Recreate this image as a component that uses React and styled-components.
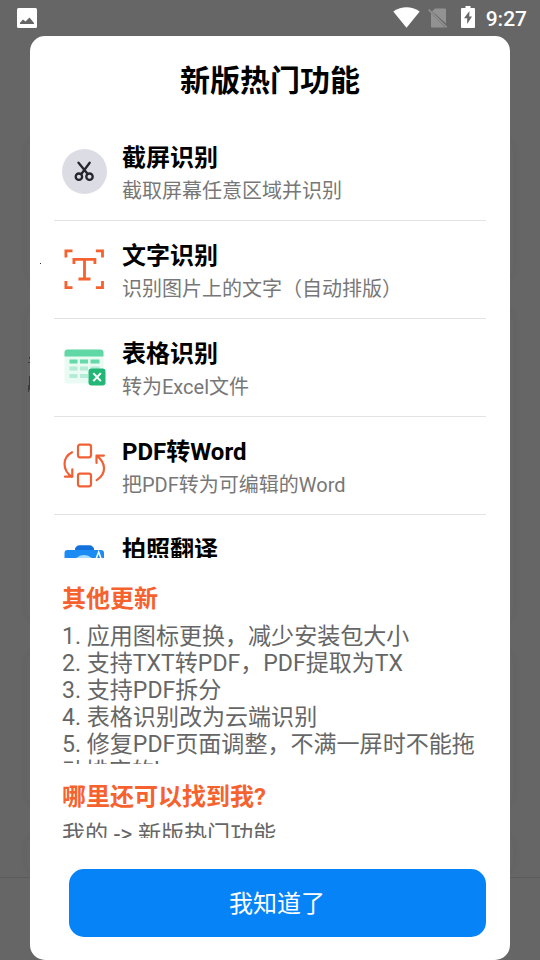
import React from "react"
import styled, { createGlobalStyle } from "styled-components"

const features = [
  { id: "shot", Icon: ScissorsIcon, title: "截屏识别", desc: "截取屏幕任意区域并识别" },
  { id: "text", Icon: TextScanIcon, title: "文字识别", desc: "识别图片上的文字（自动排版）" },
  { id: "table", Icon: TableIcon, title: "表格识别", desc: "转为Excel文件" },
  { id: "word", Icon: ConvertIcon, title: "PDF转Word", desc: "把PDF转为可编辑的Word" },
  { id: "camera", Icon: CameraIcon, title: "拍照翻译", desc: "" },
]

const updates = [
  "1. 应用图标更换，减少安装包大小",
  "2. 支持TXT转PDF，PDF提取为TX",
  "3. 支持PDF拆分",
  "4. 表格识别改为云端识别",
  "5. 修复PDF页面调整，不满一屏时不能拖动排序的b",
]

function ScissorsIcon() {
  return (
    <svg width="46" height="46" viewBox="0.5 0.5 46 46" fill="none">
      <circle cx="23" cy="23" r="22.5" fill="#dcdde4" />
      <g stroke="#23252f" strokeWidth="2.3" strokeLinecap="round">
        <path d="M17 14.2 25.8 25M28.2 14.2 20.2 25" />
        <circle cx="17.4" cy="28.2" r="3.2" />
        <circle cx="28" cy="28.2" r="3.2" />
      </g>
    </svg>
  )
}

function TextScanIcon() {
  return (
    <svg width="46" height="46" viewBox="0.5 0.5 46 46" fill="none" stroke="#f6622e" strokeWidth="2.8">
      <path d="M4.4 11V4.4H11M34.4 4.4H41V11M41 34.6V41.2H34.4M11 41.2H4.4V34.6" />
      <path d="M12.4 17.4V12.8H33.4V17.4M23 12.8V32.3M17 32.5H29" />
    </svg>
  )
}

function TableIcon() {
  return (
    <svg width="46" height="46" viewBox="0.5 0.5 46 46">
      <rect x="3" y="5" width="39" height="34" rx="3" fill="#e9fbf3" />
      <path d="M3 12V8q0-3 3-3h33q3 0 3 3v4z" fill="#5fd8a5" />
      <path d="M8 15h8v4H8zM18.5 15h8v4h-8zM29 15h9v4h-9z" fill="#65d9aa" />
      <path d="M8 22h8v4H8zM18.5 22h8v4h-8zM29 22h9v4h-9zM8 29.5h8v4H8zM18.5 29.5h8v4h-8z" fill="#b4ecd5" />
      <rect x="27" y="24" width="17" height="17" rx="3" fill="#22b777" />
      <path d="m31.8 28.6 7.5 8M39.3 28.6l-7.5 8" stroke="#fff" strokeWidth="2.1" />
    </svg>
  )
}

function ConvertIcon() {
  return (
    <svg width="46" height="46" viewBox="0.5 0.5 46 46" fill="none" stroke="#ef6035" strokeWidth="2.2" strokeLinecap="round" strokeLinejoin="round">
      <rect x="16.5" y="2.2" width="13" height="12.6" rx="2" />
      <rect x="16.5" y="31.2" width="13" height="12.6" rx="2" />
      <path d="M10.6 9.8C.6 15 .6 27.3 10.2 34.3M3.5 34.2h7.3v-7.4" />
      <path d="M35.2 37.6C45.3 31.5 44.6 20.5 35.2 13.2M35 20.5v-7.4h7.4" />
    </svg>
  )
}

function CameraIcon() {
  return (
    <svg width="46" height="46" viewBox="0.5 -1.5 46 46">
      <rect x="3" y="7.5" width="39.5" height="33" rx="3" fill="#1c8cf5" />
      <path d="M13.5 7.5V6q.5-1 1.5-2 1-1.3 3-1.3h10q2 0 3 1.3 1 1 1.5 2v1.5z" fill="#1470dc" />
      <circle cx="22.5" cy="24" r="11.5" fill="#a9dcff" />
      <path d="m34.5 16.5 2.7-7 2.5 7" fill="none" stroke="#fff" strokeWidth="1.5" />
    </svg>
  )
}

const StatusIcons = () => (
  <Status>
    <svg width="20" height="20" viewBox="0 0 20 20">
      <rect x="0" y="0" width="20" height="20" rx="1.5" fill="#fff" />
      <path d="M3 16v-1.2l3-3.4 2.5 2.2L12.5 9.5 17 15v1z" fill="#666" />
    </svg>
    <StatusRight>
      <svg className="wifi" width="27" height="21" viewBox="0 0 27 21">
        <path d="M.3 4.5Q13.5-3.8 26.7 4.5L13.5 20.8z" fill="#fff" />
      </svg>
      <svg className="sim" width="20" height="20" viewBox="0 0 20 20">
        <path d="M7 .5h10q1 0 1 1v14L4 3.2zM3 5l14 14.5H4q-1 0-1-1z" fill="#929292" />
        <path d="m.7 1.6 18 17.8" stroke="#929292" strokeWidth="1.5" />
      </svg>
      <svg className="battery" width="14" height="22" viewBox="0 0 14 22">
        <path d="M4.5 0h5v2H13q1 0 1 1v18q0 1-1 1H1q-1 0-1-1V3q0-1 1-1h3.5z" fill="#fff" />
        <path d="M8.5 5 3 12.3h3.2V18L11 10.5H8.2z" fill="#666" />
      </svg>
      <time>9:27</time>
    </StatusRight>
  </Status>
)

const App = () => {
  return (
    <Screen>
      <GlobalStyle />
      <StatusIcons />
      <Backdrop>
        <Card $height="138px" />
        <Card $height="310px">
          <svg width="3" height="40" viewBox="0 0 3 40">
            <path d="M2 2h1v2H2zM1 7h2v1H1zM2 21h1v14H2zM1 30h1v7H1z" fill="#3a3a3a" />
          </svg>
        </Card>
        <Card $height="152px" />
        <Card $height="36px" />
        <TabBar />
      </Backdrop>
      <Dialog>
        <Title>新版热门功能</Title>
        <FeatureList>
          {features.map(({ id, Icon, title, desc }) => (
            <Feature key={id}>
              <Icon />
              <div className="info">
                <h4>{title}</h4>
                <p>{desc}</p>
              </div>
            </Feature>
          ))}
        </FeatureList>
        <Heading>其他更新</Heading>
        <Notes $height="142px">
          {updates.map(item => (
            <p key={item}>{item}</p>
          ))}
        </Notes>
        <Heading>哪里还可以找到我?</Heading>
        <Notes $height="18px">
          <p>我的 -&gt; 新版热门功能</p>
        </Notes>
        <Button>我知道了</Button>
      </Dialog>
      <Speck />
    </Screen>
  )
}

const GlobalStyle = createGlobalStyle`
  * {
    box-sizing: border-box;
    margin: 0;
    padding: 0;
  }
  body {
    background: #666;
    font-family: Roboto, "Noto Sans CJK SC", sans-serif;
  }
`

const Screen = styled.div`
  position: relative;
  width: 540px;
  height: 960px;
  overflow: hidden;
  background: #666;
`

const Status = styled.header`
  height: 36px;
  padding: 0 13px 0 17px;
  display: flex;
  align-items: center;
  justify-content: space-between;
`

const StatusRight = styled.div`
  display: flex;
  align-items: center;
  color: #fff;
  .wifi {
    margin-top: -2px;
  }
  .sim {
    margin-left: 8px;
  }
  .battery {
    margin-left: 13px;
    margin-top: -2px;
  }
  time {
    margin-left: 11px;
    padding-top: 1px;
    font-size: 21px;
    font-weight: 500;
    line-height: 36px;
  }
`

const Backdrop = styled.div`
  height: 924px;
  padding: 104px 27px 0;
  display: flex;
  flex-direction: column;
  gap: 32px;
`

const Card = styled.div`
  flex: none;
  height: ${props => props.$height};
  border-radius: 8px;
  background: #666;
  box-shadow: 0 0 8px rgba(0, 0, 0, 0.06);
  svg {
    display: block;
    margin-top: 45px;
  }
`

const TabBar = styled.div`
  flex: 1;
  margin: -27px -27px 0;
  border-top: 1px solid #5b5b5b;
`

/* the modal covers the dimmed page */
const Dialog = styled.section`
  position: absolute;
  top: 36px;
  left: 30px;
  width: 480px;
  height: 924px;
  padding: 23px 24px 0;
  border-radius: 15px;
  background: #fff;
  display: flex;
  flex-direction: column;
`

const Title = styled.h2`
  height: 64px;
  font-size: 30px;
  font-weight: 700;
  line-height: 44px;
  text-align: center;
  color: #000;
`

const FeatureList = styled.div`
  height: 435px;
  flex: none;
  overflow: hidden;
`

const Feature = styled.article`
  height: 98px;
  padding: 0 7px 0 8px;
  display: flex;
  align-items: center;
  gap: 14px;
  border-bottom: 1px solid #e3e3e3;
  svg {
    flex: none;
  }
  .info {
    padding-top: 5px;
    white-space: nowrap;
  }
  h4 {
    font-size: 24px;
    font-weight: 700;
    line-height: 34px;
    color: #000;
  }
  p {
    min-height: 32px;
    font-size: 20px;
    line-height: 32px;
    color: #777;
  }
`

const Heading = styled.h3`
  height: 32px;
  margin: 24px 8px 0;
  padding-top: 1px;
  font-size: 24px;
  font-weight: 700;
  line-height: 32px;
  color: #f6622e;
  & ~ & {
    margin-top: 16px;
  }
`

const Notes = styled.div`
  flex: none;
  height: ${props => props.$height};
  margin: 8px 8px 0;
  padding-top: 1px;
  overflow: hidden;
  font-size: 23.05px;
  line-height: 27px;
  color: #666;
`

const Button = styled.button`
  height: 68px;
  margin: 31px 0 0 15px;
  padding: 0 1px 3px 0;
  border: 0;
  border-radius: 15px;
  background: #0683f6;
  color: #fff;
  font-family: inherit;
  font-size: 24px;
`

const Speck = styled.i`
  position: absolute;
  top: 263px;
  left: 40px;
  width: 1px;
  height: 1px;
  background: #333;
`

export default App
